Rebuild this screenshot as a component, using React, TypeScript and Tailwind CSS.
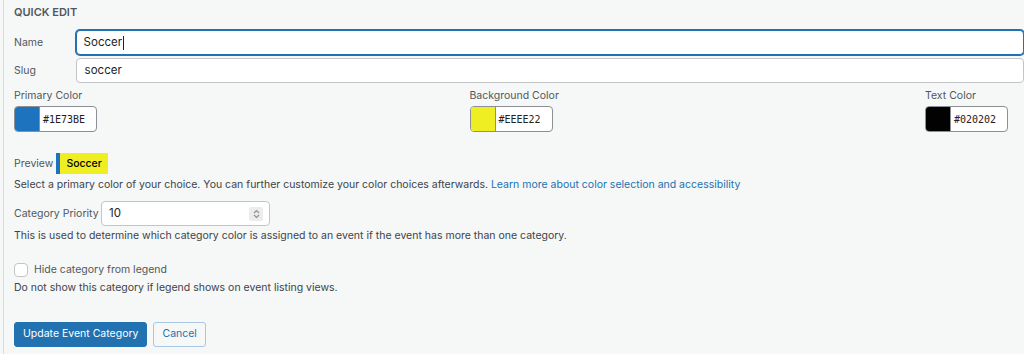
import React from "react";

function Swatch({ color, value }: { color: string; value: string }) {
  return (
    <div className="flex h-[26px] w-[83px] overflow-hidden rounded-[4px] border border-[#8c8f94] bg-white">
      <div className="w-[25px] border-r border-[#8c8f94]" style={{ backgroundColor: color }} />
      <div className="flex items-center pl-[3px] font-['DejaVu_Sans_Mono'] text-[10px] text-[#1d2327]">{value}</div>
    </div>
  );
}

function ColorField({ label, color }: { label: string; color: string }) {
  return (
    <div className="flex w-[83px] flex-col gap-[1px]">
      <span className="whitespace-nowrap leading-[18px] text-[#50575e]">{label}</span>
      <Swatch color={color} value={color} />
    </div>
  );
}

export default function App() {
  return (
    <div className="h-[354px] w-[1024px] overflow-hidden bg-[#f6f7f7] font-['Inter',sans-serif] text-[10.5px] text-[#3c434a]">
      <div className="ml-[3px] h-full border-l border-[#dcdcde] pl-[10px]">
        <div className="pt-[5px] text-[11px] font-semibold uppercase leading-[14px] text-[#50575e]">Quick Edit</div>

        <div className="mt-[11px] flex items-center">
          <span className="w-[65px] text-[#50575e]">Name</span>
          <div className="flex h-[25px] w-[1000px] items-center rounded-[4px] border border-[#2271b1] bg-white pl-[7px] text-[11.5px] text-[#1d2327] shadow-[0_0_0_1px_#2271b1]">
            Soccer<span className="ml-[1px] h-[14px] w-px bg-[#1d2327]" />
          </div>
        </div>
        <div className="mt-[3px] flex items-center">
          <span className="w-[65px] text-[#50575e]">Slug</span>
          <div className="flex h-[25px] w-[1000px] items-center rounded-[4px] border border-[#c3c4c7] bg-white pl-[8px] text-[11.5px] text-[#1d2327]">
            soccer
          </div>
        </div>

        <div className="mt-[4px] flex w-[994px] justify-between">
          <ColorField label="Primary Color" color="#1E73BE" />
          <ColorField label="Background Color" color="#EEEE22" />
          <ColorField label="Text Color" color="#020202" />
        </div>

        <div className="mt-[21px] flex items-end">
          <span className="pb-[2px] text-[#50575e]">Preview</span>
          <span className="ml-[3px] flex h-[21px] items-center border-l-[4px] border-[#1E73BE] bg-[#EEEE22] px-[6px] font-medium text-[#020202]">Soccer</span>
        </div>
        <p className="mt-[1px] leading-[20px]">
          Select a primary color of your choice. You can further customize your color choices afterwards.{" "}
          <a className="text-[#2271b1]">Learn more about color selection and accessibility</a>
        </p>

        <div className="mt-[6px] flex items-center">
          <span className="w-[87px] whitespace-nowrap text-[#50575e]">Category Priority</span>
          <div className="flex h-[25px] w-[169px] items-center justify-between rounded-[4px] border border-[#c3c4c7] bg-white pl-[7px] pr-[6px] text-[11.5px] text-[#1d2327]">
            10
            <span className="flex h-[14px] w-[14px] items-center justify-center rounded-[2px] bg-[#ececec]">
              <svg width="7" height="10" viewBox="0 0 7 10" fill="none" stroke="#8c8f94" strokeWidth="1.2">
                <path d="M1 4 L3.5 1.5 L6 4" />
                <path d="M1 6 L3.5 8.5 L6 6" />
              </svg>
            </span>
          </div>
        </div>
        <p className="leading-[20px]">
          This is used to determine which category color is assigned to an event if the event has more than one category.
        </p>

        <label className="mt-[16px] flex items-center">
          <span className="h-[14px] w-[14px] rounded-[4px] border border-[#c3c4c7] bg-white" />
          <span className="ml-[6px] text-[#50575e]">Hide category from legend</span>
        </label>
        <p className="mt-[1px] leading-[18px]">Do not show this category if legend shows on event listing views.</p>

        <div className="mt-[25px] flex gap-[6px]">
          <button className="h-[25px] rounded-[3px] border border-[#2271b1] bg-[#2271b1] px-[8px] text-[10.5px] text-white">
            Update Event Category
          </button>
          <button className="h-[25px] rounded-[3px] border border-[#a7c7e4] bg-[#f6f7f7] px-[8px] text-[10.5px] text-[#2271b1]">
            Cancel
          </button>
        </div>
      </div>
    </div>
  );
}
